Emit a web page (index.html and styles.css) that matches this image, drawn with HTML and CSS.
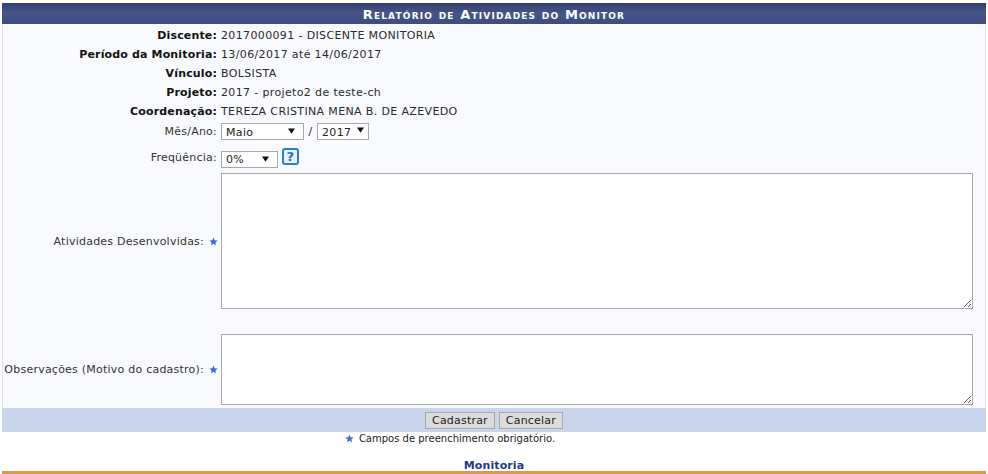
FILE: index.html
```html
<!DOCTYPE html>
<html lang="pt-BR">
<head>
<meta charset="utf-8">
<title>Relatório de Atividades do Monitor</title>
<link rel="stylesheet" href="styles.css">
</head>
<body>
<form class="panel">
  <h1 class="panel-title">Relatório de Atividades do Monitor</h1>
  <div class="fields">
    <div class="row info"><span class="label strong">Discente:</span><span class="value">2017000091 - DISCENTE MONITORIA</span></div>
    <div class="row info"><span class="label strong">Período da Monitoria:</span><span class="value">13/06/2017 até 14/06/2017</span></div>
    <div class="row info"><span class="label strong">Vínculo:</span><span class="value">BOLSISTA</span></div>
    <div class="row info"><span class="label strong">Projeto:</span><span class="value">2017 - projeto2 de teste-ch</span></div>
    <div class="row info"><span class="label strong">Coordenação:</span><span class="value">TEREZA CRISTINA MENA B. DE AZEVEDO</span></div>
    <div class="row period">
      <span class="label">Mês/Ano:</span>
      <span class="value controls">
        <span class="select month">Maio<svg class="arrow" viewBox="0 0 8 6"><path d="M0 0H8L4 6Z"/></svg></span>
        <span class="slash">/</span>
        <span class="select year">2017<svg class="arrow" viewBox="0 0 8 6"><path d="M0 0H8L4 6Z"/></svg></span>
      </span>
    </div>
    <div class="row frequency">
      <span class="label">Freqüência:</span>
      <span class="value controls">
        <span class="select pct">0%<svg class="arrow" viewBox="0 0 8 6"><path d="M0 0H8L4 6Z"/></svg></span>
        <span class="help">?</span>
      </span>
    </div>
    <div class="row area-row activities">
      <span class="label">Atividades Desenvolvidas:<svg class="star" viewBox="0 0 10 10"><path d="M5 .5 6.3 3.6 9.6 3.8 7.1 6 7.9 9.3 5 7.5 2.1 9.3 2.9 6 .4 3.8 3.7 3.6Z"/></svg></span>
      <span class="value"><textarea class="area tall"></textarea></span>
    </div>
    <div class="row area-row notes">
      <span class="label">Observações (Motivo do cadastro):<svg class="star" viewBox="0 0 10 10"><path d="M5 .5 6.3 3.6 9.6 3.8 7.1 6 7.9 9.3 5 7.5 2.1 9.3 2.9 6 .4 3.8 3.7 3.6Z"/></svg></span>
      <span class="value"><textarea class="area short"></textarea></span>
    </div>
  </div>
  <div class="actions">
    <button type="button" class="btn">Cadastrar</button>
    <button type="button" class="btn">Cancelar</button>
  </div>
</form>
<p class="hint"><svg class="star" viewBox="0 0 10 10"><path d="M5 .5 6.3 3.6 9.6 3.8 7.1 6 7.9 9.3 5 7.5 2.1 9.3 2.9 6 .4 3.8 3.7 3.6Z"/></svg><span class="hint-text">Campos de preenchimento obrigatório.</span></p>
<footer class="module">Monitoria</footer>
</body>
</html>
```
FILE: styles.css
```css
* { box-sizing: border-box; }
html, body { margin: 0; height: 100%; }
body {
  padding: 3px 2px 0;
  width: 988px;
  height: 474px;
  overflow: hidden;
  background: #fff;
  font: 11px "DejaVu Sans", Verdana, sans-serif;
  letter-spacing: .34px;
  color: #222;
}
.panel { width: 984px; display: block; }
.panel-title {
  margin: 0;
  height: 21px;
  line-height: 23px;
  text-align: center;
  color: #fff;
  font-size: 13px;
  font-weight: bold;
  font-variant: small-caps;
  letter-spacing: 1.15px;
  background: linear-gradient(#343f6e 0, #46558a 50%, #3e4c80 100%);
}
.fields {
  background: #f9fafd;
  border-left: 1px solid #dfe2ea;
  border-right: 1px solid #dfe2ea;
  padding-top: 2px;
  padding-bottom: 3px;
}
.row {
  display: grid;
  grid-template-columns: 214px 1fr;
  column-gap: 4px;
  align-items: center;
}
.info { height: 19px; }
.label { text-align: right; white-space: nowrap; color: #333; letter-spacing: .23px; }
.label.strong { font-weight: bold; color: #111; letter-spacing: .15px; }
.value { color: #2a2a2a; }
.info .value { letter-spacing: .36px; }
.controls { display: flex; align-items: center; }
.period { height: 21px; }
.frequency { height: 31px; }
.select {
  position: relative;
  display: block;
  height: 17px;
  line-height: 17px;
  padding-left: 4px;
  border: 1px solid #a9a9a9;
  background: #fff;
  color: #222;
}
.arrow { position: absolute; top: 4px; right: 8px; width: 7px; height: 6px; fill: #111; }
.month { width: 83px; }
.year { width: 52px; }
.year .arrow { right: 4px; top: 3px; }
.pct { width: 57px; margin-top: 3px; line-height: 16px; }
.slash { width: 13px; text-align: center; }
.help {
  width: 17px; height: 17px;
  margin: -3px 0 0 4px;
  border: 2px solid #2a7fd0;
  border-radius: 3px;
  background: #eaf3fb;
  color: #1e6fc0;
  font-weight: bold;
  font-size: 13px;
  line-height: 13px;
  text-align: center;
}
.area-row .value { display: block; line-height: 0; }
.activities { height: 136px; margin-bottom: 25px; }
.notes { height: 71px; }
.area {
  display: block;
  width: 752px;
  margin: 0;
  padding: 2px;
  border: 1px solid #a9a9a9;
  background: #fff;
  outline: 0;
}
.tall { height: 136px; }
.short { height: 71px; }
.star { width: 9px; height: 9px; fill: #3f6fd0; vertical-align: -1px; }
.area-row .star { margin-left: 5px; margin-right: -1px; }
.actions {
  height: 24px;
  display: flex;
  justify-content: center;
  align-items: center;
  gap: 4px;
  background: #c9d5ec;
}
.btn {
  height: 17px;
  padding: 0 6px;
  border: 1px solid #a9a9a9;
  background: #dcdcdc;
  color: #222;
  font: 11px "DejaVu Sans", Verdana, sans-serif;
  letter-spacing: .2px;
  line-height: 15px;
}
.hint {
  margin: 0;
  height: 13px;
  padding-right: 88px;
  text-align: center;
  font-size: 10px;
  letter-spacing: 0;
  line-height: 13px;
  color: #222;
}
.hint-text { margin-left: 5px; }
.module {
  margin-top: 14px;
  height: 15px;
  width: 984px;
  line-height: 14px;
  text-align: center;
  font-weight: bold;
  letter-spacing: .1px;
  color: #1f3a8a;
  border-bottom: 3px solid #d99a45;
}
```
